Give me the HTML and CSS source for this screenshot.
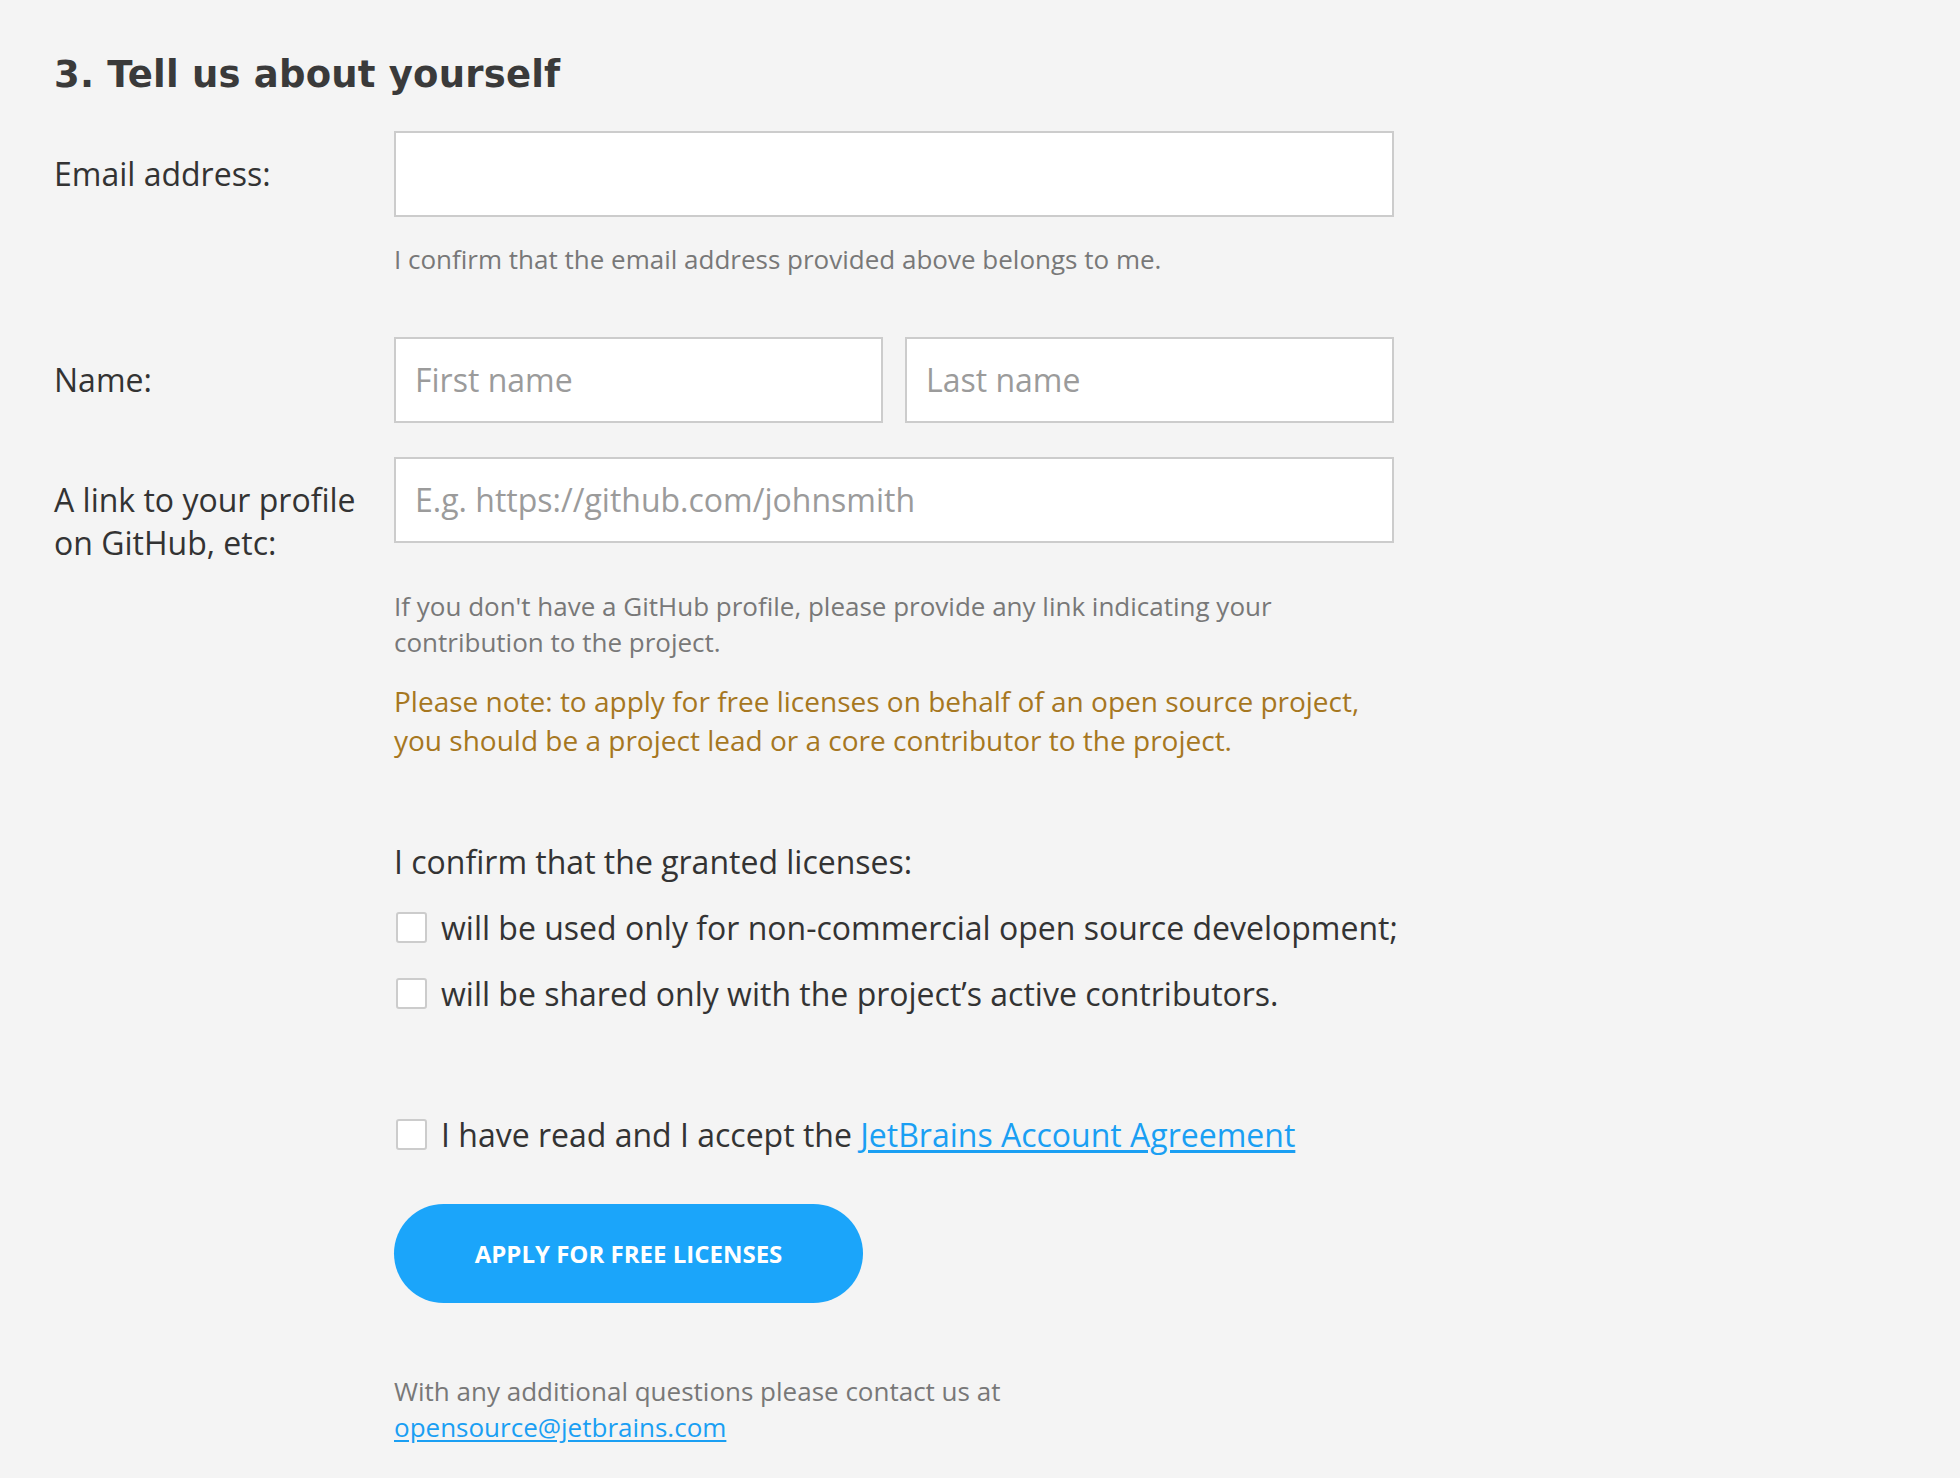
FILE: index.html
```html
<!DOCTYPE html>
<html lang="en">
<head>
<meta charset="utf-8">
<title>Tell us about yourself</title>
<link rel="stylesheet" href="styles.css">
</head>
<body>
<main class="page">
  <h2 class="title">3. Tell us about yourself</h2>

  <div class="row row-email">
    <label class="label">Email address:</label>
    <div class="field">
      <input class="input" type="email">
      <p class="hint">I confirm that the email address provided above belongs to me.</p>
    </div>
  </div>

  <div class="row row-name">
    <label class="label">Name:</label>
    <div class="field name-pair">
      <input class="input" type="text" placeholder="First name">
      <input class="input" type="text" placeholder="Last name">
    </div>
  </div>

  <div class="row row-link">
    <label class="label">A link to your profile on GitHub, etc:</label>
    <div class="field">
      <input class="input" type="text" placeholder="E.g. https://github.com/johnsmith">
      <p class="hint hint-profile">If you don't have a GitHub profile, please provide any link indicating your contribution to the project.</p>
      <p class="note">Please note: to apply for free licenses on behalf of an open source project, you should be a project lead or a core contributor to the project.</p>
    </div>
  </div>

  <div class="row row-confirm">
    <div class="label"></div>
    <div class="field">
      <p class="confirm-title">I confirm that the granted licenses:</p>
      <label class="check-row"><input class="check" type="checkbox"><span>will be used only for non-commercial open source development;</span></label>
      <label class="check-row"><input class="check" type="checkbox"><span>will be shared only with the project’s active contributors.</span></label>

      <label class="check-row accept-row"><input class="check" type="checkbox"><span>I have read and I accept the <a class="link" href="#">JetBrains Account Agreement</a></span></label>

      <button class="apply" type="button">APPLY FOR FREE LICENSES</button>

      <p class="hint footer">With any additional questions please contact us at<br><a class="link" href="#">opensource@jetbrains.com</a></p>
    </div>
  </div>
</main>
</body>
</html>
```

FILE: styles.css
```css
html, body {
  margin: 0;
  padding: 0;
  background: #f4f4f4;
}

body {
  font-family: "Open Sans", "Liberation Sans", sans-serif;
  color: #333333;
}

.page {
  padding: 55px 0 40px 54px;
  width: 1340px;
}

.title {
  margin: 0 0 36px 0;
  font-family: "DejaVu Sans", "Open Sans", sans-serif;
  font-weight: 700;
  font-size: 37px;
  line-height: 40px;
  letter-spacing: 0.2px;
  color: #3a3a3a;
}

.row {
  display: grid;
  grid-template-columns: 340px 1000px;
}

.label {
  font-size: 32px;
  line-height: 43.5px;
  padding-top: 21px;
  padding-right: 20px;
  color: #333333;
}

.field {
  display: flex;
  flex-direction: column;
}

.input {
  box-sizing: border-box;
  height: 86px;
  width: 100%;
  margin: 0;
  border: 2px solid #cccccc;
  background: #ffffff;
  padding: 0 19px;
  font-family: "Open Sans", "Liberation Sans", sans-serif;
  font-size: 32px;
  color: #333333;
  outline: none;
}

.input::placeholder {
  color: #9b9b9b;
}

.name-pair {
  flex-direction: row;
  gap: 22px;
}

.name-pair .input {
  flex: 1;
  min-width: 0;
}

.row-email { margin-bottom: 59px; }
.row-name { margin-bottom: 34px; }

.hint {
  margin: 24px 0 0 0;
  font-size: 26px;
  line-height: 36.5px;
  color: #787878;
}

.hint-profile {
  margin-top: 45px;
}

.note {
  margin: 21px 0 0 0;
  font-size: 28px;
  line-height: 39px;
  color: #a6771f;
}

.confirm-title {
  margin: 80px 0 0 0;
  font-size: 32px;
  line-height: 44px;
}

.check-row {
  display: flex;
  align-items: center;
  gap: 14px;
  font-size: 32px;
  line-height: 44px;
  margin-top: 22px;
  white-space: nowrap;
}

.check {
  appearance: none;
  -webkit-appearance: none;
  box-sizing: border-box;
  width: 31px;
  height: 31px;
  margin: 0 0 0 2px;
  border: 2px solid #cccccc;
  border-radius: 3px;
  background: #ffffff;
  flex: none;
}

.accept-row {
  margin-top: 97px;
}

.link {
  color: #1a9ff3;
  text-decoration: underline;
  text-underline-offset: 3px;
}

.apply {
  margin-top: 47px;
  width: 469px;
  height: 99px;
  border: none;
  border-radius: 50px;
  background: #1ba5fa;
  color: #ffffff;
  font-family: "Open Sans", "Liberation Sans", sans-serif;
  font-weight: 700;
  font-size: 24px;
  cursor: pointer;
}

.footer {
  margin-top: 70px;
}
```
